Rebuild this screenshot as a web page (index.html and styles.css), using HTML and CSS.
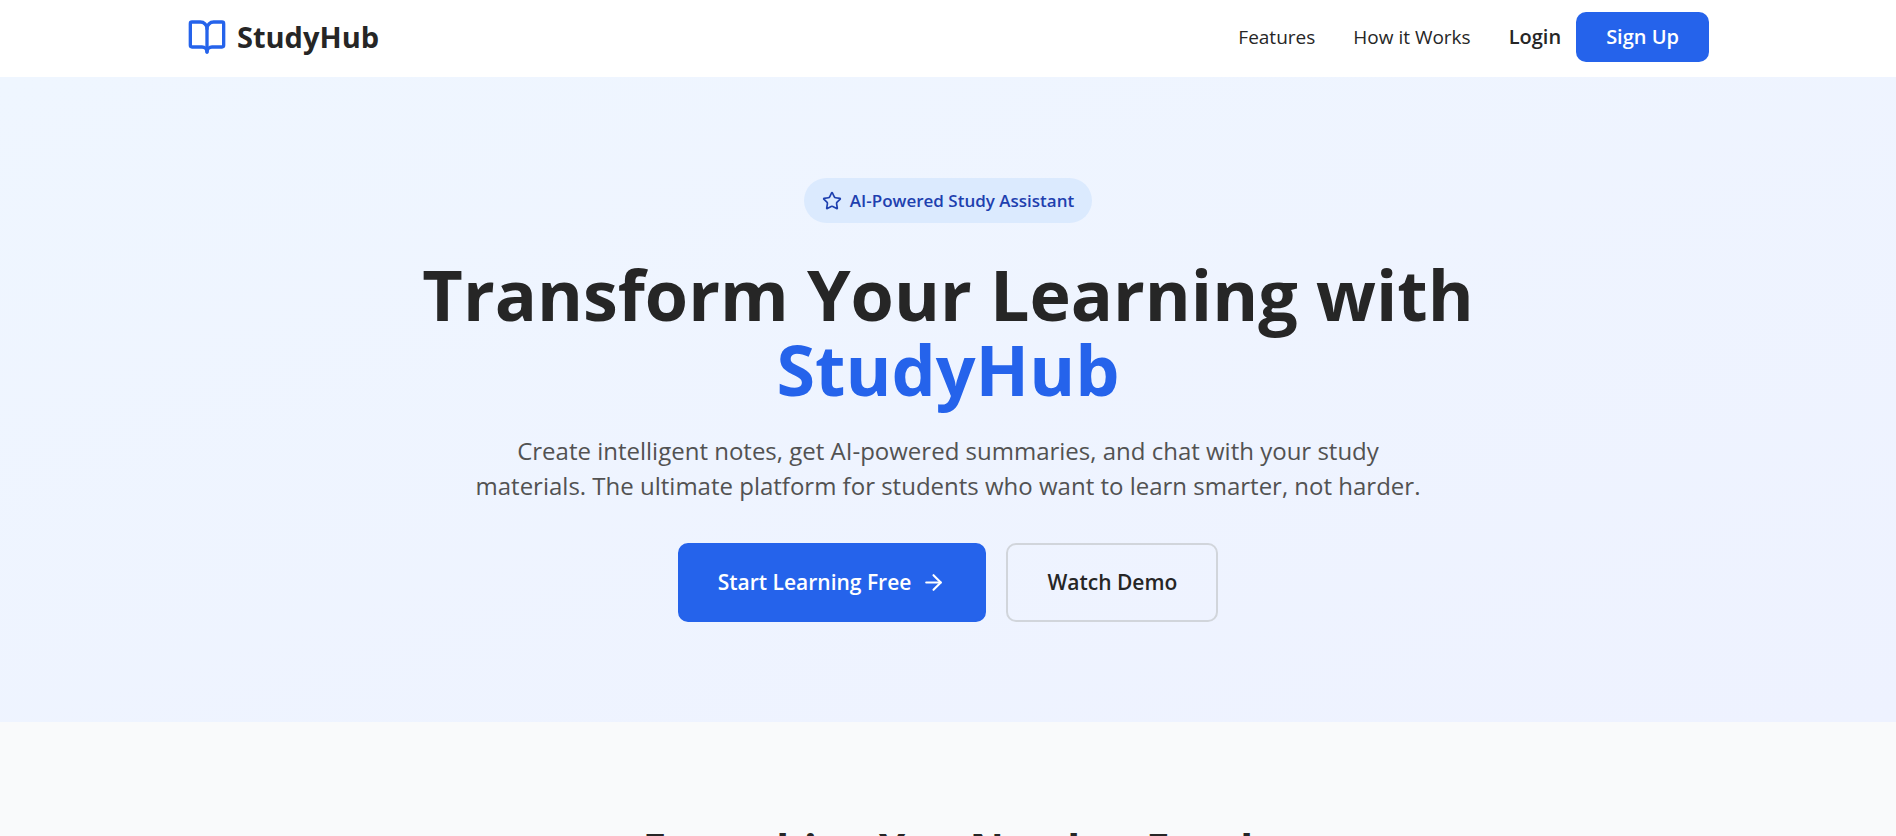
FILE: index.html
```html
<!DOCTYPE html>
<html lang="en">
<head>
<meta charset="utf-8">
<meta name="viewport" content="width=device-width, initial-scale=1">
<title>StudyHub</title>
<link rel="stylesheet" href="styles.css">
</head>
<body>
<header class="header">
  <div class="header-inner">
    <a class="brand" href="#">
      <svg class="brand-icon" viewBox="0 0 24 24" aria-hidden="true"><path d="M12 7v14"/><path d="M3 18a1 1 0 0 1-1-1V4a1 1 0 0 1 1-1h5a4 4 0 0 1 4 4 4 4 0 0 1 4-4h5a1 1 0 0 1 1 1v13a1 1 0 0 1-1 1h-6a3 3 0 0 0-3 3 3 3 0 0 0-3-3z"/></svg>
      <span>StudyHub</span>
    </a>
    <nav class="nav">
      <a class="nav-link" href="#features">Features</a>
      <a class="nav-link" href="#how">How it Works</a>
      <div class="account">
        <button class="login" type="button">Login</button>
        <button class="signup" type="button">Sign Up</button>
      </div>
    </nav>
  </div>
</header>
<main>
  <section class="hero">
    <div class="badge">
      <svg class="badge-icon" viewBox="0 0 24 24" aria-hidden="true"><path d="M11.525 2.295a.53.53 0 0 1 .95 0l2.31 4.679a2.123 2.123 0 0 0 1.595 1.16l5.166.756a.53.53 0 0 1 .294.904l-3.736 3.638a2.123 2.123 0 0 0-.611 1.878l.882 5.14a.53.53 0 0 1-.771.56l-4.618-2.428a2.122 2.122 0 0 0-1.973 0L6.396 21.01a.53.53 0 0 1-.77-.56l.881-5.139a2.122 2.122 0 0 0-.611-1.879L2.16 9.795a.53.53 0 0 1 .294-.906l5.165-.755a2.122 2.122 0 0 0 1.597-1.16z"/></svg>
      <span>AI-Powered Study Assistant</span>
    </div>
    <h1 class="title">Transform Your Learning with <span class="title-accent">StudyHub</span></h1>
    <p class="lead">Create intelligent notes, get AI-powered summaries, and chat with your study materials. The ultimate platform for students who want to learn smarter, not harder.</p>
    <div class="actions">
      <button class="btn btn-primary" type="button">Start Learning Free
        <svg class="btn-icon" viewBox="0 0 24 24" aria-hidden="true"><path d="M5 12h14"/><path d="m12 5 7 7-7 7"/></svg>
      </button>
      <button class="btn btn-outline" type="button">Watch Demo</button>
    </div>
  </section>
  <section class="features" id="features">
    <h2 class="section-title">Everything You Need to Excel</h2>
  </section>
</main>
</body>
</html>
```
FILE: styles.css
```css
* { box-sizing: border-box; }
body {
  margin: 0;
  background: #f9fafb;
  color: #262626;
  font-family: "Segoe UI", "Open Sans", "Noto Sans", sans-serif;
  font-size: 19px;
  line-height: 30px;
}
svg { fill: none; stroke: currentColor; stroke-width: 2; stroke-linecap: round; stroke-linejoin: round; flex: none; }
a { color: inherit; text-decoration: none; }
button { font: inherit; color: inherit; border: 0; background: none; cursor: pointer; }

.header { background: #fff; }
.header-inner {
  max-width: 1600px;
  margin: 0 auto;
  padding: 12px 39px 15px;
  display: flex;
  align-items: center;
  justify-content: space-between;
}
.brand { display: flex; align-items: center; gap: 10px; font-size: 29px; font-weight: 700; line-height: 40px; }
.brand-icon { width: 40px; height: 40px; color: #2563eb; }
.nav { display: flex; align-items: center; gap: 38px; }
.account { display: flex; align-items: center; gap: 15px; font-size: 20px; font-weight: 600; }
.login { padding: 0; }
.signup { padding: 10px 30px; border-radius: 10px; background: #2563eb; color: #fff; }

.hero {
  display: flex;
  flex-direction: column;
  align-items: center;
  padding: 101px 40px 100px;
  background: linear-gradient(to bottom right, #eff6ff, #eef2ff);
  text-align: center;
}
.badge {
  display: flex;
  align-items: center;
  gap: 8px;
  padding: 10px 18px;
  border-radius: 30px;
  background: #dbeafe;
  color: #1e40af;
  font-size: 17px;
  font-weight: 600;
  line-height: 25px;
}
.badge-icon { width: 20px; height: 20px; }
.title { max-width: 1120px; margin: 34px 0 26px; font-size: 70px; font-weight: 700; line-height: 75px; }
.title-accent { display: block; color: #2563eb; }
.lead { max-width: 960px; margin: 0 0 40px; color: #525252; font-size: 24px; line-height: 35px; }
.actions { display: flex; gap: 20px; }
.btn {
  display: flex;
  align-items: center;
  gap: 10px;
  padding: 22px 38px;
  border: 2px solid transparent;
  border-radius: 10px;
  font-size: 21px;
  font-weight: 600;
  line-height: 31px;
}
.btn-primary { border-color: #2563eb; background: #2563eb; color: #fff; }
.btn-icon { width: 25px; height: 25px; }
.btn-outline { padding: 22px 39px; border-color: #d1d5db; }

.features { padding: 100px 40px; text-align: center; }
.section-title { margin: 0; font-size: 42px; font-weight: 700; line-height: 52px; }
```
